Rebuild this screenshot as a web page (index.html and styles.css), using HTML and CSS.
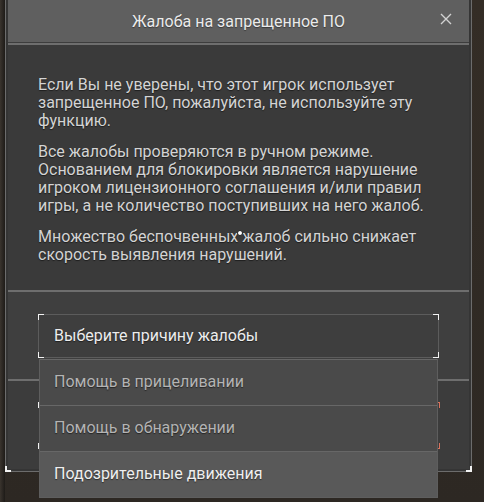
FILE: index.html
```html
<!DOCTYPE html>
<html lang="ru">

<head>
    <meta charset="UTF-8">
    <meta name="viewport" content="width=device-width, initial-scale=1.0">
    <title>Жалоба</title>
    <link rel="stylesheet" href="styles.css">
</head>

<body>
    <div class="page">
        <div class="dialog">
            <div class="header">
                <span class="title">Жалоба на запрещенное ПО</span>
                <svg class="close" width="12" height="12" viewBox="0 0 12 12">
                    <path d="M1 1L11 11M11 1L1 11" stroke="#d2d2d2" stroke-width="1.4" fill="none"/>
                </svg>
            </div>
            <div class="rule"></div>
            <div class="content">
                <p>Если Вы не уверены, что этот игрок использует запрещенное ПО, пожалуйста, не используйте эту функцию.</p>
                <p>Все жалобы проверяются в ручном режиме. Основанием для блокировки является нарушение игроком лицензионного соглашения и/или правил игры, а не количество поступивших на него жалоб.</p>
                <p>Множество беспочвенных жалоб сильно снижает скорость выявления нарушений.</p>
            </div>
            <div class="rule"></div>
            <div class="section">
                <div class="select">
                    <span class="c tl"></span><span class="c tr"></span>
                    <span class="c bl"></span><span class="c br"></span>
                    Выберите причину жалобы
                    <ul class="options">
                        <li>Помощь в прицеливании</li>
                        <li>Помощь в обнаружении</li>
                        <li class="hover">Подозрительные движения</li>
                    </ul>
                </div>
            </div>
            <div class="rule"></div>
            <div class="footer">
                <div class="buttons">
                    <span class="c tl"></span><span class="c bl"></span>
                    <span class="c tr red"></span><span class="c br red"></span>
                </div>
            </div>
            <span class="c bl outer"></span><span class="c br outer"></span>
        </div>
        <span class="cursor"></span>
    </div>
</body>

</html>
```

FILE: styles.css
```css
* {
    padding: 0;
    margin: 0;
    box-sizing: border-box;
}

body {
    background: #2f2a25;
    font-family: Roboto, "Liberation Sans", sans-serif;
    color: #d4d4d4;
}

.page {
    position: relative;
    width: 484px;
    height: 502px;
    overflow: hidden;
    padding-left: 5px;
    background: linear-gradient(to right, #3a342e 0, #1e1b18 5px, transparent 5px),
        linear-gradient(to bottom, #342d26, #2d2823);
}

.dialog {
    position: relative;
    width: 467px;
    border: 1px solid #6c6c6c;
    border-top: none;
    padding: 0 2px 2px;
    background: #353535;
}

.header {
    position: relative;
    height: 43px;
    background: #5f5f5f;
    border-bottom: 1px solid #3d3d3d;
    display: flex;
    align-items: center;
    justify-content: center;
}

.title {
    font-size: 16px;
    color: #ebebeb;
    text-shadow: 0 1px 1px rgba(0, 0, 0, 0.4);
}

.close {
    position: absolute;
    right: 17px;
    top: 13px;
}

.rule {
    height: 2px;
    background: #6e6e6e;
}

.content {
    background: #3a3a3a;
    padding: 31px 30px 25px;
    font-size: 16px;
    line-height: 18px;
    height: 245px;
}

.content p {
    margin-bottom: 13px;
    text-shadow: 0 1px 1px rgba(0, 0, 0, 0.5);
}

.section {
    background: #3f3f3f;
    height: 87px;
    padding: 22px 30px 0;
}

.select {
    position: relative;
    height: 44px;
    width: 401px;
    border: 1px solid #5c5c5c;
    background: #3e3e3e;
    padding-left: 15px;
    font-size: 16px;
    line-height: 42px;
    color: #ededed;
    text-shadow: 0 1px 1px rgba(0, 0, 0, 0.5);
}

.options {
    position: absolute;
    z-index: 2;
    left: 0;
    top: 44px;
    width: 399px;
    list-style: none;
    border: 1px solid #5e5e5e;
    border-top: none;
    font-size: 16px;
}

.options li {
    height: 46px;
    line-height: 44px;
    padding-left: 14px;
    border-top: 1px solid #676767;
    background: #4a4a4a;
    color: #b4b4b4;
}

.options li.hover {
    background: #595959;
    color: #efefef;
}

.footer {
    background: #3c3c3c;
    height: 88px;
    padding: 22px 30px 0;
}

.buttons {
    position: relative;
    width: 402px;
    height: 45px;
}

.c {
    position: absolute;
    width: 6px;
    height: 6px;
    border-color: #f2f2f2;
    border-style: solid;
    border-width: 0;
    z-index: 3;
}

.c.red {
    border-color: #d9735e;
}

.tl {
    left: -1px;
    top: -1px;
    border-left-width: 1px;
    border-top-width: 1px;
}

.tr {
    right: -1px;
    top: -1px;
    border-right-width: 1px;
    border-top-width: 1px;
}

.bl {
    left: -1px;
    bottom: -1px;
    border-left-width: 1px;
    border-bottom-width: 1px;
}

.br {
    right: -1px;
    bottom: -1px;
    border-right-width: 1px;
    border-bottom-width: 1px;
}

.buttons .c {
    z-index: 1;
}

.buttons .tl,
.buttons .bl {
    left: 0;
}

.buttons .tr,
.buttons .br {
    right: 0;
}

.c.outer {
    width: 6px;
    height: 6px;
    border-width: 0;
}

.bl.outer {
    border-left-width: 2px;
    border-bottom-width: 2px;
}

.br.outer {
    border-right-width: 2px;
    border-bottom-width: 2px;
}

.cursor {
    position: absolute;
    left: 237px;
    top: 230px;
    width: 6px;
    height: 6px;
    border-radius: 50%;
    background: #fff;
    border: 1px solid #222;
}
```
